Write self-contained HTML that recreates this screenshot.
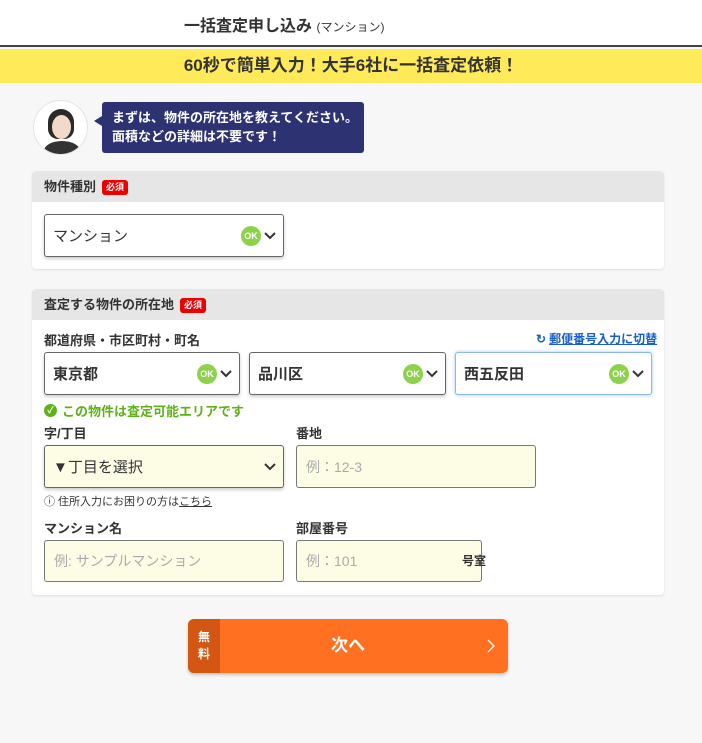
<!DOCTYPE html>
<html><head><meta charset="utf-8"><style>
*{margin:0;padding:0;box-sizing:border-box}
body{width:702px;height:743px;background:#f7f7f7;font-family:"Liberation Sans","Noto Sans CJK JP",sans-serif;color:#333;position:relative;overflow:hidden}
.a{position:absolute}
.hdr{left:0;top:0;width:702px;height:47px;background:#fff;border-bottom:2px solid #444}
.band{left:0;top:49px;width:702px;height:34px;background:#ffeb5a;text-align:center;font-weight:bold;font-size:17px;line-height:34px;color:#333}
.card{background:#fff;border-radius:4px;box-shadow:0 1px 2px rgba(0,0,0,.1)}
.ch{background:#e6e6e6;border-radius:4px 4px 0 0;height:31px;font-size:13px;font-weight:bold;padding-left:12px;line-height:31px;color:#333}
.req{display:inline-block;background:#e00;color:#fff;font-size:9px;border-radius:3px;padding:0 4px;line-height:15px;margin-left:6px;vertical-align:1px}
.sel{background:#fff;border:1px solid #666;border-radius:3px;box-shadow:0 2px 3px rgba(0,0,0,.2);font-size:15px;padding-left:8px;display:flex;align-items:center}
.ok{position:absolute;right:22px;top:50%;margin-top:-10px;width:20px;height:20px;border-radius:50%;background:#8cd24a;color:#fff;font-size:9px;font-weight:bold;text-align:center;line-height:20px}
.chev{position:absolute;right:6px;top:50%;margin-top:-7px;width:14px;height:14px}
.inp{background:#fdfde6;border:1px solid #777;border-radius:3px;font-size:14px;color:#aaa;padding-left:9px;display:flex;align-items:center}
.lb{font-size:13px;font-weight:bold;color:#333}
</style></head><body>
<div class="a hdr"><div class="a" style="left:184px;top:12px;font-size:16px;font-weight:bold">一括査定申し込み <span style="font-size:12px;font-weight:normal">(マンション)</span></div></div>
<div class="a band">60秒で簡単入力！大手6社に一括査定依頼！</div>
<div class="a" style="left:33px;top:100px;width:55px;height:55px;border-radius:50%;background:#fff;border:1px solid #e4e4e4;overflow:hidden">
<div class="a" style="left:14px;top:8px;width:26px;height:30px;border-radius:13px 13px 10px 10px;background:#2a2a2a"></div>
<div class="a" style="left:18px;top:14px;width:19px;height:24px;border-radius:50%;background:#f3d9c8"></div>
<div class="a" style="left:10px;top:40px;width:36px;height:20px;border-radius:50% 50% 0 0;background:#333"></div></div>
<div class="a" style="left:94px;top:116px;width:0;height:0;border-top:5px solid transparent;border-bottom:5px solid transparent;border-right:8px solid #2d3272"></div>
<div class="a" style="left:102px;top:102px;width:262px;height:51px;background:#2d3272;border-radius:3px;color:#fff;font-size:13px;font-weight:bold;padding:6px 0 0 10px;line-height:19px">まずは、物件の所在地を教えてください。<br>面積などの詳細は不要です！</div>

<div class="a card" style="left:32px;top:171px;width:632px;height:98px"><div class="ch">物件種別<span class="req">必須</span></div></div>
<div class="a sel" style="left:44px;top:214px;width:240px;height:43px">マンション<div class="ok">OK</div><svg class="chev" viewBox="0 0 14 14"><path d="M2 4l5 5 5-5" fill="none" stroke="#333" stroke-width="2"/></svg></div>

<div class="a card" style="left:32px;top:289px;width:632px;height:306px"><div class="ch">査定する物件の所在地<span class="req">必須</span></div></div>
<div class="a lb" style="left:44px;top:330px">都道府県・市区町村・町名</div>
<div class="a" style="left:536px;top:330px;font-size:12px;font-weight:bold;color:#1a5fc8;text-decoration:underline"><span style="text-decoration:none;display:inline-block;margin-right:3px">↻</span>郵便番号入力に切替</div>
<div class="a sel" style="left:44px;top:352px;width:196px;height:43px;font-weight:bold">東京都<div class="ok">OK</div><svg class="chev" viewBox="0 0 14 14"><path d="M2 4l5 5 5-5" fill="none" stroke="#333" stroke-width="2"/></svg></div>
<div class="a sel" style="left:249px;top:352px;width:197px;height:43px;font-weight:bold">品川区<div class="ok">OK</div><svg class="chev" viewBox="0 0 14 14"><path d="M2 4l5 5 5-5" fill="none" stroke="#333" stroke-width="2"/></svg></div>
<div class="a sel" style="left:455px;top:352px;width:197px;height:43px;font-weight:bold;border-color:#8ab8ef;box-shadow:0 0 3px #9cc4f5">西五反田<div class="ok">OK</div><svg class="chev" viewBox="0 0 14 14"><path d="M2 4l5 5 5-5" fill="none" stroke="#333" stroke-width="2"/></svg></div>
<div class="a" style="left:44px;top:401px;font-size:13px;font-weight:bold;color:#5fb11a;display:flex;align-items:center"><span style="display:inline-block;width:13px;height:13px;border-radius:50%;background:#5fb11a;color:#fff;font-size:9px;text-align:center;line-height:13px;margin-right:5px">✓</span>この物件は査定可能エリアです</div>
<div class="a lb" style="left:44px;top:423px">字/丁目</div>
<div class="a lb" style="left:296px;top:423px">番地</div>
<div class="a sel" style="left:44px;top:445px;width:240px;height:43px;background:#fdfde6;color:#333">▼丁目を選択<svg class="chev" viewBox="0 0 14 14"><path d="M2 4l5 5 5-5" fill="none" stroke="#333" stroke-width="2"/></svg></div>
<div class="a inp" style="left:296px;top:445px;width:240px;height:43px">例：12-3</div>
<div class="a" style="left:44px;top:493px;font-size:11px;color:#333">ⓘ 住所入力にお困りの方は<span style="text-decoration:underline">こちら</span></div>
<div class="a lb" style="left:44px;top:518px">マンション名</div>
<div class="a lb" style="left:296px;top:518px">部屋番号</div>
<div class="a inp" style="left:44px;top:540px;width:240px;height:42px">例: サンプルマンション</div>
<div class="a inp" style="left:296px;top:540px;width:186px;height:42px">例：101</div>
<div class="a lb" style="left:462px;top:552px;font-size:12px">号室</div>

<div class="a" style="left:188px;top:619px;width:320px;height:54px;background:#ff7020;border-radius:6px;overflow:hidden;box-shadow:0 2px 3px rgba(0,0,0,.2)">
<div class="a" style="left:0;top:0;width:32px;height:54px;background:#d35712;color:#fff;font-size:12px;font-weight:bold;text-align:center;padding-top:10px;line-height:17px">無<br>料</div>
<div class="a" style="left:32px;top:0;width:256px;text-align:center;line-height:54px;color:#fff;font-size:17px;font-weight:bold">次へ</div>
<svg class="a" style="left:298px;top:19px" width="10" height="16" viewBox="0 0 10 16"><path d="M2 2l6 6-6 6" fill="none" stroke="#fff" stroke-width="1.3"/></svg></div>
</body></html>
